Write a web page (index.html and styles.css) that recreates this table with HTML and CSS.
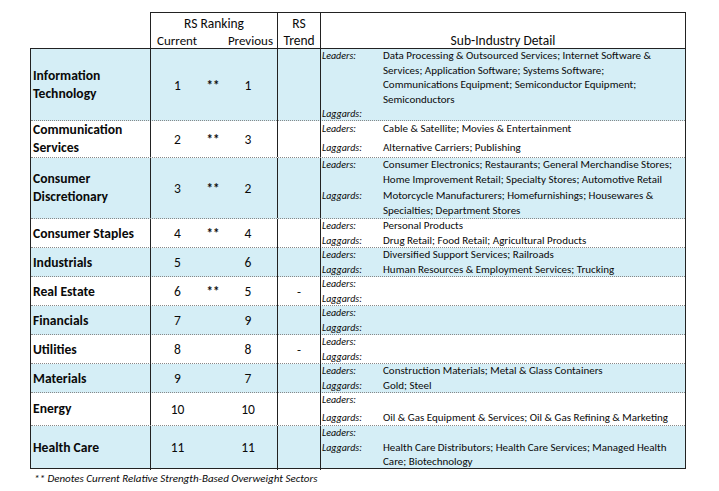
FILE: index.html
```html
<!DOCTYPE html>
<html>
<head>
<meta charset="utf-8">
<link rel="stylesheet" href="styles.css">
</head>
<body>
<div class="page">
  <div class="head">
    <div class="hcell blank"></div>
    <div class="hcell rank">
      <div class="htop">RS Ranking</div>
      <div class="hsub"><span>Current</span><span>Previous</span></div>
    </div>
    <div class="hcell trend">
      <div class="htop">RS</div>
      <div class="hbot">Trend</div>
    </div>
    <div class="hcell detailh">
      <div class="hbot">Sub-Industry Detail</div>
    </div>
  </div>

  <div class="body">
    <div class="row blue r73">
      <div class="sector">Information<br>Technology</div>
      <div class="nums"><span>1</span><span class="star">**</span><span>1</span></div>
      <div class="tr"></div>
      <div class="det">
        <div class="item"><i>Leaders:</i><span>Data Processing &amp; Outsourced Services; Internet Software &amp;<br>Services; Application Software; Systems Software;<br>Communications Equipment; Semiconductor Equipment;<br>Semiconductors</span></div>
        <div class="item"><i>Laggards:</i><span></span></div>
      </div>
    </div>

    <div class="row r37">
      <div class="sector">Communication<br>Services</div>
      <div class="nums"><span>2</span><span class="star">**</span><span>3</span></div>
      <div class="tr"></div>
      <div class="det spaced">
        <div class="item"><i>Leaders:</i><span>Cable &amp; Satellite; Movies &amp; Entertainment</span></div>
        <div class="item"><i>Laggards:</i><span>Alternative Carriers; Publishing</span></div>
      </div>
    </div>

    <div class="row blue r61">
      <div class="sector">Consumer<br>Discretionary</div>
      <div class="nums"><span>3</span><span class="star">**</span><span>2</span></div>
      <div class="tr"></div>
      <div class="det">
        <div class="item"><i>Leaders:</i><span>Consumer Electronics; Restaurants; General Merchandise Stores;<br>Home Improvement Retail; Specialty Stores; Automotive Retail</span></div>
        <div class="item"><i>Laggards:</i><span>Motorcycle Manufacturers; Homefurnishings; Housewares &amp;<br>Specialties; Department Stores</span></div>
      </div>
    </div>

    <div class="row r29">
      <div class="sector">Consumer Staples</div>
      <div class="nums"><span>4</span><span class="star">**</span><span>4</span></div>
      <div class="tr"></div>
      <div class="det">
        <div class="item"><i>Leaders:</i><span>Personal Products</span></div>
        <div class="item"><i>Laggards:</i><span>Drug Retail; Food Retail; Agricultural Products</span></div>
      </div>
    </div>

    <div class="row blue r29">
      <div class="sector">Industrials</div>
      <div class="nums"><span>5</span><span class="star"></span><span>6</span></div>
      <div class="tr"></div>
      <div class="det">
        <div class="item"><i>Leaders:</i><span>Diversified Support Services; Railroads</span></div>
        <div class="item"><i>Laggards:</i><span>Human Resources &amp; Employment Services; Trucking</span></div>
      </div>
    </div>

    <div class="row r29">
      <div class="sector">Real Estate</div>
      <div class="nums"><span>6</span><span class="star">**</span><span>5</span></div>
      <div class="tr">-</div>
      <div class="det">
        <div class="item"><i>Leaders:</i><span></span></div>
        <div class="item"><i>Laggards:</i><span></span></div>
      </div>
    </div>

    <div class="row blue r29">
      <div class="sector">Financials</div>
      <div class="nums"><span>7</span><span class="star"></span><span>9</span></div>
      <div class="tr"></div>
      <div class="det">
        <div class="item"><i>Leaders:</i><span></span></div>
        <div class="item"><i>Laggards:</i><span></span></div>
      </div>
    </div>

    <div class="row r29">
      <div class="sector">Utilities</div>
      <div class="nums"><span>8</span><span class="star"></span><span>8</span></div>
      <div class="tr">-</div>
      <div class="det">
        <div class="item"><i>Leaders:</i><span></span></div>
        <div class="item"><i>Laggards:</i><span></span></div>
      </div>
    </div>

    <div class="row blue r29">
      <div class="sector">Materials</div>
      <div class="nums"><span>9</span><span class="star"></span><span>7</span></div>
      <div class="tr"></div>
      <div class="det">
        <div class="item"><i>Leaders:</i><span>Construction Materials; Metal &amp; Glass Containers</span></div>
        <div class="item"><i>Laggards:</i><span>Gold; Steel</span></div>
      </div>
    </div>

    <div class="row r33">
      <div class="sector">Energy</div>
      <div class="nums"><span>10</span><span class="star"></span><span>10</span></div>
      <div class="tr"></div>
      <div class="det">
        <div class="item"><i>Leaders:</i><span></span></div>
        <div class="item"><i>Laggards:</i><span>Oil &amp; Gas Equipment &amp; Services; Oil &amp; Gas Refining &amp; Marketing</span></div>
      </div>
    </div>

    <div class="row blue r43 last">
      <div class="sector">Health Care</div>
      <div class="nums"><span>11</span><span class="star"></span><span>11</span></div>
      <div class="tr"></div>
      <div class="det">
        <div class="item"><i>Leaders:</i><span></span></div>
        <div class="item"><i>Laggards:</i><span>Health Care Distributors; Health Care Services; Managed Health<br>Care; Biotechnology</span></div>
      </div>
    </div>
  </div>

  <div class="note">** Denotes Current Relative Strength-Based Overweight Sectors</div>
</div>
</body>
</html>
```

FILE: styles.css
```css
* { box-sizing: border-box; }
html, body { margin: 0; padding: 0; background: #fff; }
body {
  font-family: Carlito, Lato, "Open Sans", sans-serif;
  color: #0a0a0a;
}
.page {
  padding: 12px 0 0 30px;
  width: 719px;
}

/* header */
.head {
  display: grid;
  grid-template-columns: 120px 127px 43px 366px;
  height: 36px;
}
.hcell {
  border-top: 1px solid #222;
  border-left: 1px solid #222;
  display: flex;
  flex-direction: column;
  align-items: center;
  justify-content: space-between;
  font-size: 13.5px;
  line-height: 17px;
  padding-top: 2px;
}
.hcell.blank { border: none; }
.hcell.detailh {
  border-right: 1px solid #222;
  justify-content: flex-end;
}
.hsub {
  align-self: stretch;
  display: flex;
  justify-content: space-between;
  padding: 0 4px 0 6px;
  font-size: 13px;
}

/* body */
.body {
  width: 656px;
  border: 1px solid #222;
}
.row {
  display: grid;
  grid-template-columns: 119px 127px 43px 365px;
  border-bottom: 1px dotted #888;
}
.row.last { border-bottom: none; }
.row.blue { background: #d5eef6; }
.r73 { height: 72px; }
.r37 { height: 37px; }
.r61 { height: 61px; }
.r29 { height: 29px; }
.r33 { height: 33px; }
.r43 { height: 42px; }

.sector {
  display: flex;
  align-items: center;
  padding-left: 2px;
  font-weight: 700;
  font-size: 13.6px;
  line-height: 18px;
}
.nums {
  border-left: 1px solid #222;
  display: grid;
  grid-template-columns: 53px 18px 52px;
  align-items: center;
  justify-items: center;
  font-size: 13.5px;
}
.star { font-weight: 700; font-size: 13px; }
.tr {
  border-left: 1px solid #222;
  display: flex;
  align-items: center;
  justify-content: center;
  font-size: 13px;
}
.det {
  border-left: 1px solid #222;
  display: flex;
  flex-direction: column;
  justify-content: space-between;
  padding: 0 0 0 1px;
}
.det.spaced { padding: 1px 0 2px 1px; }
.item {
  display: grid;
  grid-template-columns: 61px 1fr;
  line-height: 14.5px;
  font-size: 11px;
  white-space: nowrap;
}
.item i {
  font-size: 10px;
}

.note {
  margin-top: 3px;
  padding-left: 4px;
  font-style: italic;
  font-size: 11px;
  line-height: 14px;
}
```
